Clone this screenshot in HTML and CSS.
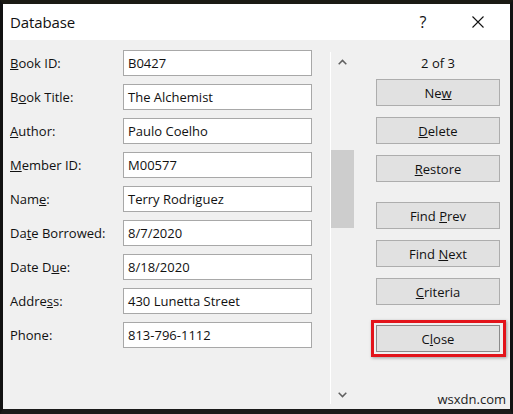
FILE: index.html
```html
<!DOCTYPE html>
<html>
<head>
<meta charset="utf-8">
<link rel="stylesheet" href="styles.css">
</head>
<body>
<div class="frame">
  <div class="titlebar">
    <span class="title">Database</span>
    <span class="help">?</span>
    <svg class="xicon" width="12" height="12" viewBox="0 0 12 12"><path d="M0.5 0.5 L11.5 11.5 M11.5 0.5 L0.5 11.5" stroke="#111" stroke-width="1.1" fill="none"/></svg>
  </div>
  <div class="content">
    <div class="form">
      <div class="row"><label><u>B</u>ook ID:</label><div class="field">B0427</div></div>
      <div class="row"><label>B<u>o</u>ok Title:</label><div class="field">The Alchemist</div></div>
      <div class="row"><label><u>A</u>uthor:</label><div class="field">Paulo Coelho</div></div>
      <div class="row"><label><u>M</u>ember ID:</label><div class="field">M00577</div></div>
      <div class="row"><label>Nam<u>e</u>:</label><div class="field">Terry Rodriguez</div></div>
      <div class="row"><label>Da<u>t</u>e Borrowed:</label><div class="field">8/7/2020</div></div>
      <div class="row"><label>Date D<u>u</u>e:</label><div class="field">8/18/2020</div></div>
      <div class="row"><label>Addre<u>s</u>s:</label><div class="field">430 Lunetta Street</div></div>
      <div class="row"><label>Phone:</label><div class="field">813-796-1112</div></div>
    </div>
    <div class="scrollbar">
      <svg class="arrow up" width="9" height="6" viewBox="0 0 9 6"><path d="M0.7 5.2 L4.5 1.4 L8.3 5.2" stroke="#606060" stroke-width="1.5" fill="none"/></svg>
      <div class="track"><div class="thumb"></div></div>
      <svg class="arrow down" width="9" height="6" viewBox="0 0 9 6"><path d="M0.7 0.8 L4.5 4.6 L8.3 0.8" stroke="#606060" stroke-width="1.5" fill="none"/></svg>
    </div>
    <div class="actions">
      <div class="counter">2 of 3</div>
      <div class="group">
        <button class="btn">Ne<u>w</u></button>
        <button class="btn"><u>D</u>elete</button>
        <button class="btn"><u>R</u>estore</button>
      </div>
      <div class="group">
        <button class="btn">Find <u>P</u>rev</button>
        <button class="btn">Find <u>N</u>ext</button>
        <button class="btn"><u>C</u>riteria</button>
      </div>
      <div class="highlight"><button class="btn close">C<u>l</u>ose</button></div>
      <div class="watermark">wsxdn.com</div>
    </div>
  </div>
</div>
</body>
</html>
```
FILE: styles.css
```css
* { box-sizing: border-box; }
html, body { margin: 0; padding: 0; }
body {
  width: 513px;
  height: 414px;
  background: #151515;
  font-family: "Open Sans", "Noto Sans", sans-serif;
  color: #111;
  overflow: hidden;
}
.frame {
  width: 513px;
  height: 414px;
  border-top: 4px solid #1b1a14;
  border-left: 3px solid #111;
  border-right: 3px solid #111;
  border-bottom: 5px solid #1a1a1a;
  display: flex;
  flex-direction: column;
}
.titlebar {
  height: 36px;
  background: #fff;
  display: flex;
  align-items: center;
  padding-left: 7px;
}
.title { font-size: 15px; flex: 1; letter-spacing: -0.1px; }
.help { font-size: 16px; width: 18px; margin-right: 40px; text-align: center; }
.xicon { margin-right: 26px; }
.content {
  flex: 1;
  background: #f0f0f0;
  display: flex;
}
.form {
  width: 327px;
  padding: 10px 0 0 7px;
  display: flex;
  flex-direction: column;
  gap: 8px;
}
.row {
  display: flex;
  align-items: center;
  height: 26px;
}
label {
  width: 113px;
  font-size: 13px;
}
.field {
  width: 189px;
  height: 26px;
  background: #fff;
  border: 1px solid #a8a8a8;
  font-size: 13px;
  padding-left: 4px;
  display: flex;
  align-items: center;
}
.scrollbar {
  width: 25px;
  border-left: 1px solid #fff;
  margin: 12px 0 5px;
  display: flex;
  flex-direction: column;
  align-items: center;
}
.arrow.up { margin: 7px 0 0 -2px; }
.arrow.down { margin: 0 0 6px -2px; }
.track {
  flex: 1;
  width: 100%;
  padding-top: 85px;
}
.thumb {
  width: 23px;
  height: 78px;
  background: #cdcdcd;
}
.actions {
  width: 155px;
  padding-left: 21px;
  display: flex;
  flex-direction: column;
}
.counter {
  font-size: 13px;
  text-align: center;
  width: 124px;
  height: 39px;
  padding-top: 14px;
}
.group {
  display: flex;
  flex-direction: column;
  gap: 11px;
  margin-bottom: 20px;
}
.group:first-of-type { gap: 12px; }
.btn {
  width: 124px;
  height: 27px;
  background: #e1e1e1;
  border: 1px solid #adadad;
  font-family: inherit;
  font-size: 13px;
  color: #111;
  padding: 0;
}
.highlight {
  width: 135px;
  margin-left: -5px;
  margin-top: -5px;
  border: 3px solid #e3141b;
  padding: 2px 3px 2px 2px;
  box-shadow: 1px 1px 3px rgba(0,0,0,0.35);
}
.close { border-color: #8a8a8a; width: 124px; }
.watermark {
  margin-top: auto;
  font-size: 13px;
  text-align: right;
  width: 130px;
  padding-bottom: 1px;
  color: #222;
}
```
